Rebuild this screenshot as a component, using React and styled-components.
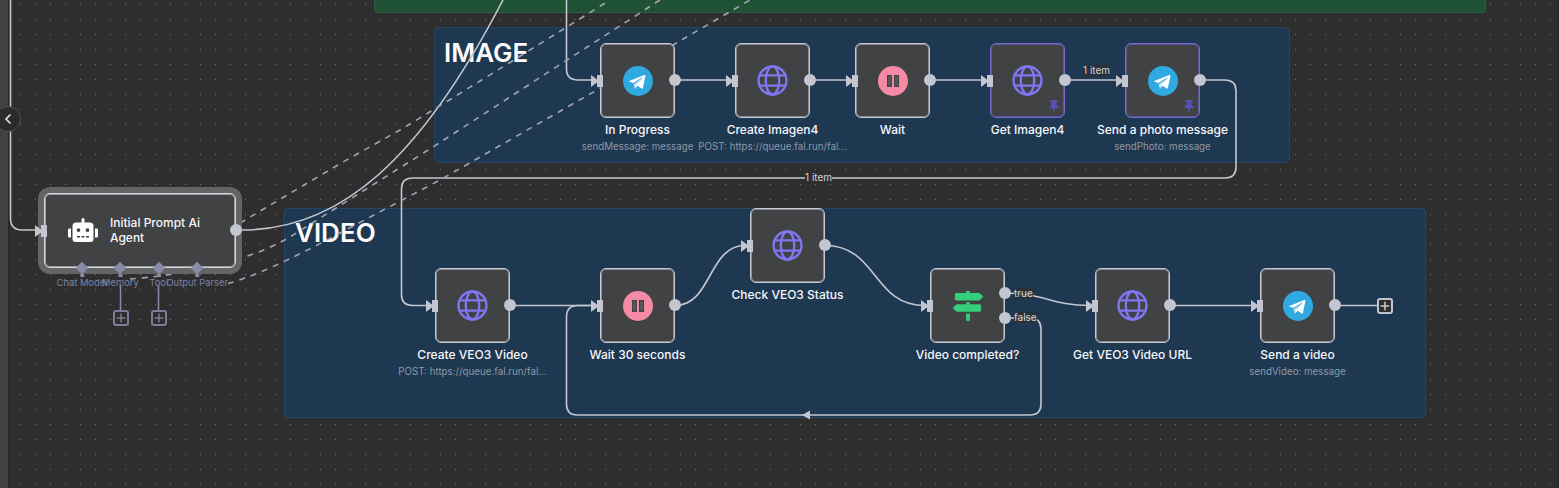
import React from 'react';
import styled, { createGlobalStyle } from 'styled-components';
import { FaRobot, FaThumbtack, FaMapSigns } from 'react-icons/fa';
import { ChevronLeft } from 'lucide-react';

const Global = createGlobalStyle`
  html, body { margin: 0; padding: 0; background: #2e2e2e; }
  body { font-family: Inter, "Liberation Sans", sans-serif; }
`;

const Canvas = styled.div`
  position: relative;
  width: 1559px;
  height: 488px;
  overflow: hidden;
  background-color: #2e2e2e;
  background-image: radial-gradient(circle at 5.5px 4.5px, #757575 0.6px, transparent 0.95px);
  background-size: 15px 15px;
`;

const Rail = styled.div`
  position: absolute;
  left: 0;
  top: 0;
  width: 8px;
  height: 100%;
  background: #414244;
  border-right: 1px solid #262626;
`;

const Collapse = styled.button`
  position: absolute;
  left: -5px;
  top: 106px;
  width: 26px;
  height: 26px;
  padding: 0;
  border-radius: 50%;
  border: 1px solid #4e4e4e;
  background: #2b2b2b;
  color: #e6e6ea;
  display: flex;
  align-items: center;
  justify-content: center;
  z-index: 4;
`;

const Sticky = styled.div`
  position: absolute;
  left: ${p => p.$x}px;
  top: ${p => p.$y}px;
  width: ${p => p.$w}px;
  height: ${p => p.$h}px;
  box-sizing: border-box;
  border-radius: 4px;
  border: 1px solid ${p => (p.$green ? '#2b5e42' : '#264560')};
  background: ${p => (p.$green ? '#1f5135' : '#1f3851')};
  padding: ${p => p.$pad};
  overflow: hidden;
`;

const StickyTitle = styled.h1`
  margin: 0;
  font-size: 26px;
  line-height: 30px;
  font-weight: 600;
  color: #fbfbfb;
`;

const ClippedNote = styled.span`
  position: absolute;
  left: 404px;
  top: -12px;
  font-size: 12px;
  line-height: 15px;
  color: #f5eec8;
`;

const Edges = styled.svg`
  position: absolute;
  left: 0;
  top: 0;
  width: 1559px;
  height: 488px;
  z-index: 1;
  pointer-events: none;
`;

const NodeWrap = styled.div`
  position: absolute;
  left: ${p => p.$x}px;
  top: ${p => p.$y}px;
  width: 75px;
  display: flex;
  flex-direction: column;
  align-items: center;
  z-index: 2;
`;

const NodeBox = styled.div`
  position: relative;
  box-sizing: border-box;
  width: 75px;
  height: 75px;
  flex: none;
  border-radius: 6px;
  background: #414244;
  border: 1px solid ${p => (p.$pinned ? '#7568d0' : '#c6c9d2')};
  box-shadow: inset 0 0 0 1px ${p => (p.$pinned ? 'rgba(117, 104, 208, 0.55)' : 'rgba(198, 201, 210, 0.55)')};
  display: flex;
  align-items: center;
  justify-content: center;
`;

const NodeLabel = styled.div`
  margin-top: 4px;
  font-size: 12px;
  line-height: 15px;
  font-weight: 500;
  color: #f6f6fa;
  white-space: nowrap;
`;

const NodeSub = styled.div`
  margin-top: 3px;
  font-size: 9.75px;
  line-height: 13px;
  color: #8d98a6;
  white-space: nowrap;
`;

const Input = styled.span`
  position: absolute;
  left: -4px;
  top: 50%;
  width: 6px;
  height: 12px;
  margin-top: -6px;
  background: #c3c6d0;
  &::before {
    content: '';
    position: absolute;
    left: -6px;
    top: 0;
    border-left: 8px solid #c3c6d0;
    border-top: 6px solid transparent;
    border-bottom: 6px solid transparent;
  }
`;

const Output = styled.span`
  position: absolute;
  left: 100%;
  top: ${p => p.$top ?? 30}px;
  width: 12px;
  height: 12px;
  margin-left: -5.5px;
  border-radius: 50%;
  background: #c3c6d0;
  display: block;
`;

const PinMark = styled(FaThumbtack)`
  position: absolute;
  right: 5px;
  bottom: 5px;
  width: 10px;
  height: 12px;
  color: #5a4eb8;
`;

const BranchTag = styled.span`
  position: absolute;
  left: ${p => p.$x}px;
  top: ${p => p.$y}px;
  font-size: 10px;
  line-height: 11px;
  color: #d4d6dd;
  background: rgba(46, 46, 46, ${p => p.$alpha ?? 0.75});
  z-index: 2;
  white-space: nowrap;
`;

const Round = styled.span`
  width: 30px;
  height: 30px;
  border-radius: 50%;
  background: ${p => p.$bg};
  display: flex;
  align-items: center;
  justify-content: center;
`;

const Signs = styled(FaMapSigns)`
  width: 30px;
  height: 30px;
  color: #35ce7a;
`;

const AgentWrap = styled.div`
  position: absolute;
  left: 44px;
  top: 193px;
  width: 192px;
  z-index: 2;
`;

const AgentBox = styled.div`
  position: relative;
  width: 192px;
  height: 75px;
  box-sizing: border-box;
  border: 1px solid #d5d7de;
  border-radius: 6px;
  background: #414244;
  box-shadow: 0 0 0 6px #646464, inset 0 0 0 1px rgba(213, 215, 222, 0.6);
  display: flex;
  align-items: center;
  gap: 12px;
  padding: 0 0 2px 23px;
`;

const AgentIcon = styled(FaRobot)`
  width: 30px;
  height: 30px;
  color: #fff;
  flex: none;
`;

const AgentTitle = styled.div`
  width: 100px;
  font-size: 12px;
  line-height: 15px;
  font-weight: 500;
  color: #f6f6fa;
`;

const PortRow = styled.div`
  position: relative;
  display: flex;
  margin-top: -5px;
  padding-left: 18.8px;
`;

const Port = styled.div`
  width: 38.4px;
  display: flex;
  flex-direction: column;
  align-items: center;
`;

const PortDiamond = styled.span`
  width: 10px;
  height: 10px;
  flex: none;
  background: #8a8ba6;
  transform: rotate(45deg) scale(0.9);
`;

const PortLabel = styled.span`
  margin-top: 3px;
  font-size: 9.4px;
  line-height: 13px;
  color: #7d84a8;
  white-space: nowrap;
`;

const PlusBox = styled.span`
  position: absolute;
  left: ${p => p.$x}px;
  top: ${p => p.$y}px;
  width: 16px;
  height: 16px;
  box-sizing: border-box;
  border: 2px solid ${p => p.$color};
  border-radius: 3px;
  background: #2e2e2e;
  color: ${p => p.$color};
  z-index: 2;
  display: flex;
  align-items: center;
  justify-content: center;
`;

const Globe = () => (
  <svg width="31" height="31" viewBox="0 0 30 30" fill="none" stroke="#8175f0" strokeWidth="2.3">
    <circle cx="15" cy="15" r="13.5" />
    <ellipse cx="15" cy="15" rx="6.5" ry="13.5" />
    <path d="M3 10h24M3 20h24" />
  </svg>
);

const Telegram = () => (
  <Round $bg="#30a8e0">
    <svg width="30" height="30" viewBox="0 0 24 24">
      <path
        fill="#fff"
        d="M5.491 11.74l11.57-4.461c.537-.194 1.006.131.832.943l.001-.001-1.97 9.281c-.146.658-.537.818-1.084.508l-3-2.211-1.447 1.394c-.16.16-.295.295-.605.295l.213-3.053 5.56-5.023c.242-.213-.054-.333-.373-.121l-6.871 4.326-2.962-.924c-.643-.204-.657-.643.136-.953z"
      />
      <path fill="#cfe0ec" d="M9.95 18.4L10.15 15.35L15.7 10.33C15.94 10.12 15.65 10 15.33 10.21L8.46 14.53L9.3 17.8Z" />
    </svg>
  </Round>
);

const Pause = () => (
  <Round $bg="#f58aa6">
    <svg width="30" height="30" viewBox="0 0 30 30" fill="#55565a" stroke="#414244" strokeWidth="1">
      <rect x="9.5" y="9.5" width="4" height="11" />
      <rect x="16.5" y="9.5" width="4" height="11" />
    </svg>
  </Round>
);

const Plus = () => (
  <svg width="10" height="10" viewBox="0 0 10 10" stroke="currentColor" strokeWidth="1.6" strokeLinecap="round">
    <path d="M5 1.2v7.6M1.2 5h7.6" />
  </svg>
);

const icons = { globe: <Globe />, telegram: <Telegram />, pause: <Pause />, signs: <Signs /> };

const nodes = [
  { x: 600, y: 43, label: 'In Progress', sub: 'sendMessage: message', icon: 'telegram' },
  { x: 735, y: 43, label: 'Create Imagen4', sub: 'POST: https://queue.fal.run/fal...', icon: 'globe' },
  { x: 855, y: 43, label: 'Wait', icon: 'pause' },
  { x: 990, y: 43, label: 'Get Imagen4', icon: 'globe', pinned: true },
  { x: 1125, y: 43, label: 'Send a photo message', sub: 'sendPhoto: message', icon: 'telegram', pinned: true },
  { x: 435, y: 268, label: 'Create VEO3 Video', sub: 'POST: https://queue.fal.run/fal...', icon: 'globe' },
  { x: 600, y: 268, label: 'Wait 30 seconds', icon: 'pause' },
  { x: 750, y: 208, label: 'Check VEO3 Status', icon: 'globe' },
  { x: 930, y: 268, label: 'Video completed?', icon: 'signs', outputs: [18.3, 43] },
  { x: 1095, y: 268, label: 'Get VEO3 Video URL', icon: 'globe' },
  { x: 1260, y: 268, label: 'Send a video', sub: 'sendVideo: message', icon: 'telegram' },
];

const solid = [
  'M10.5 0V218Q10.5 230 22 230H37',
  'M242 230C340 230 420 160 503 0',
  'M566.5 0V69Q566.5 80 578 80H592',
  'M675 80H730',
  'M810 80H850',
  'M930 80H985',
  'M1065 80H1120',
  'M1200 80H1225Q1236 80 1236 91V167Q1236 178 1225 178H412.5Q401.5 178 401.5 189V294.5Q401.5 305.5 412.5 305.5H430',
  'M510 305.5H595',
  'M1005 318H1030Q1041 318 1041 329V404Q1041 415 1030 415H577Q566.5 415 566.5 404V317Q566.5 305.5 578 305.5H595',
  'M675 305.5C712 305.5 708 245.5 745 245.5',
  'M825 245.5C878 245.5 872 305.5 925 305.5',
  'M1005 293C1045 293 1050 305.5 1090 305.5',
  'M1170 305.5H1255',
  'M1335 305.5H1378',
];

const dashed = [
  'M240 223L343 162L400 130C450 100 530 50 610 0',
  'M130 279C170 276 240 266 290 237L433 147L567 60L660 0',
  'M228 283.5C250 278 290 260 340 233L440 180L597 90L673 45L750 0',
];

const ports = ['Chat Model', 'Memory', 'Tool', 'Output Parser'];

const Graph = () => (
  <Edges viewBox="0 0 1559 488" fill="none">
    {solid.map(d => (
      <path key={d} d={d} stroke="#c3c6d0" strokeWidth="1.6" />
    ))}
    {dashed.map(d => (
      <path key={d} d={d} stroke="#a5a3b8" strokeWidth="1.6" strokeDasharray="6 6" />
    ))}
    <path d="M120.5 285V310M158.5 285V310" stroke="#8a8ba6" strokeWidth="1.5" />
    <path d="M82.3 270V277M120.5 270V277M159 270V277M197.3 270V277" stroke="#8a8ba6" strokeWidth="4" />
    <path d="M802 415L810 410.5V419.5Z" fill="#c3c6d0" />
  </Edges>
);

export default function App() {
  return (
    <Canvas>
      <Global />
      <Rail />
      <Collapse aria-label="Collapse">
        <ChevronLeft size={16} strokeWidth={2.6} />
      </Collapse>

      <Sticky $green $x={374} $y={-20} $w={1112} $h={33}>
        <ClippedNote>,</ClippedNote>
      </Sticky>
      <Sticky $x={434} $y={27} $w={856} $h={136} $pad="10px 9px">
        <StickyTitle>IMAGE</StickyTitle>
      </Sticky>
      <Sticky $x={284} $y={208} $w={1142} $h={210} $pad="9px 10px">
        <StickyTitle>VIDEO</StickyTitle>
      </Sticky>

      <Graph />

      <AgentWrap>
        <AgentBox>
          <AgentIcon />
          <AgentTitle>Initial Prompt Ai Agent</AgentTitle>
          <Input />
          <Output />
        </AgentBox>
        <PortRow>
          {ports.map(p => (
            <Port key={p}>
              <PortDiamond />
              <PortLabel>{p}</PortLabel>
            </Port>
          ))}
        </PortRow>
      </AgentWrap>
      <PlusBox $x={113} $y={310} $color="#7b7c96"><Plus /></PlusBox>
      <PlusBox $x={151} $y={310} $color="#7b7c96"><Plus /></PlusBox>
      <PlusBox $x={1377} $y={298} $color="#c3c6d0"><Plus /></PlusBox>

      {nodes.map(n => (
        <NodeWrap key={n.label} $x={n.x} $y={n.y}>
          <NodeBox $pinned={n.pinned}>
            <Input />
            {icons[n.icon]}
            {(n.outputs || [30]).map(t => (
              <Output key={t} $top={t} />
            ))}
            {n.pinned && <PinMark />}
          </NodeBox>
          <NodeLabel>{n.label}</NodeLabel>
          {n.sub && <NodeSub>{n.sub}</NodeSub>}
        </NodeWrap>
      ))}

      <BranchTag $x={1083} $y={65}>1 item</BranchTag>
      <BranchTag $x={805} $y={172} $alpha={1}>1 item</BranchTag>
      <BranchTag $x={1014} $y={288}>true</BranchTag>
      <BranchTag $x={1014} $y={312}>false</BranchTag>
    </Canvas>
  );
}
